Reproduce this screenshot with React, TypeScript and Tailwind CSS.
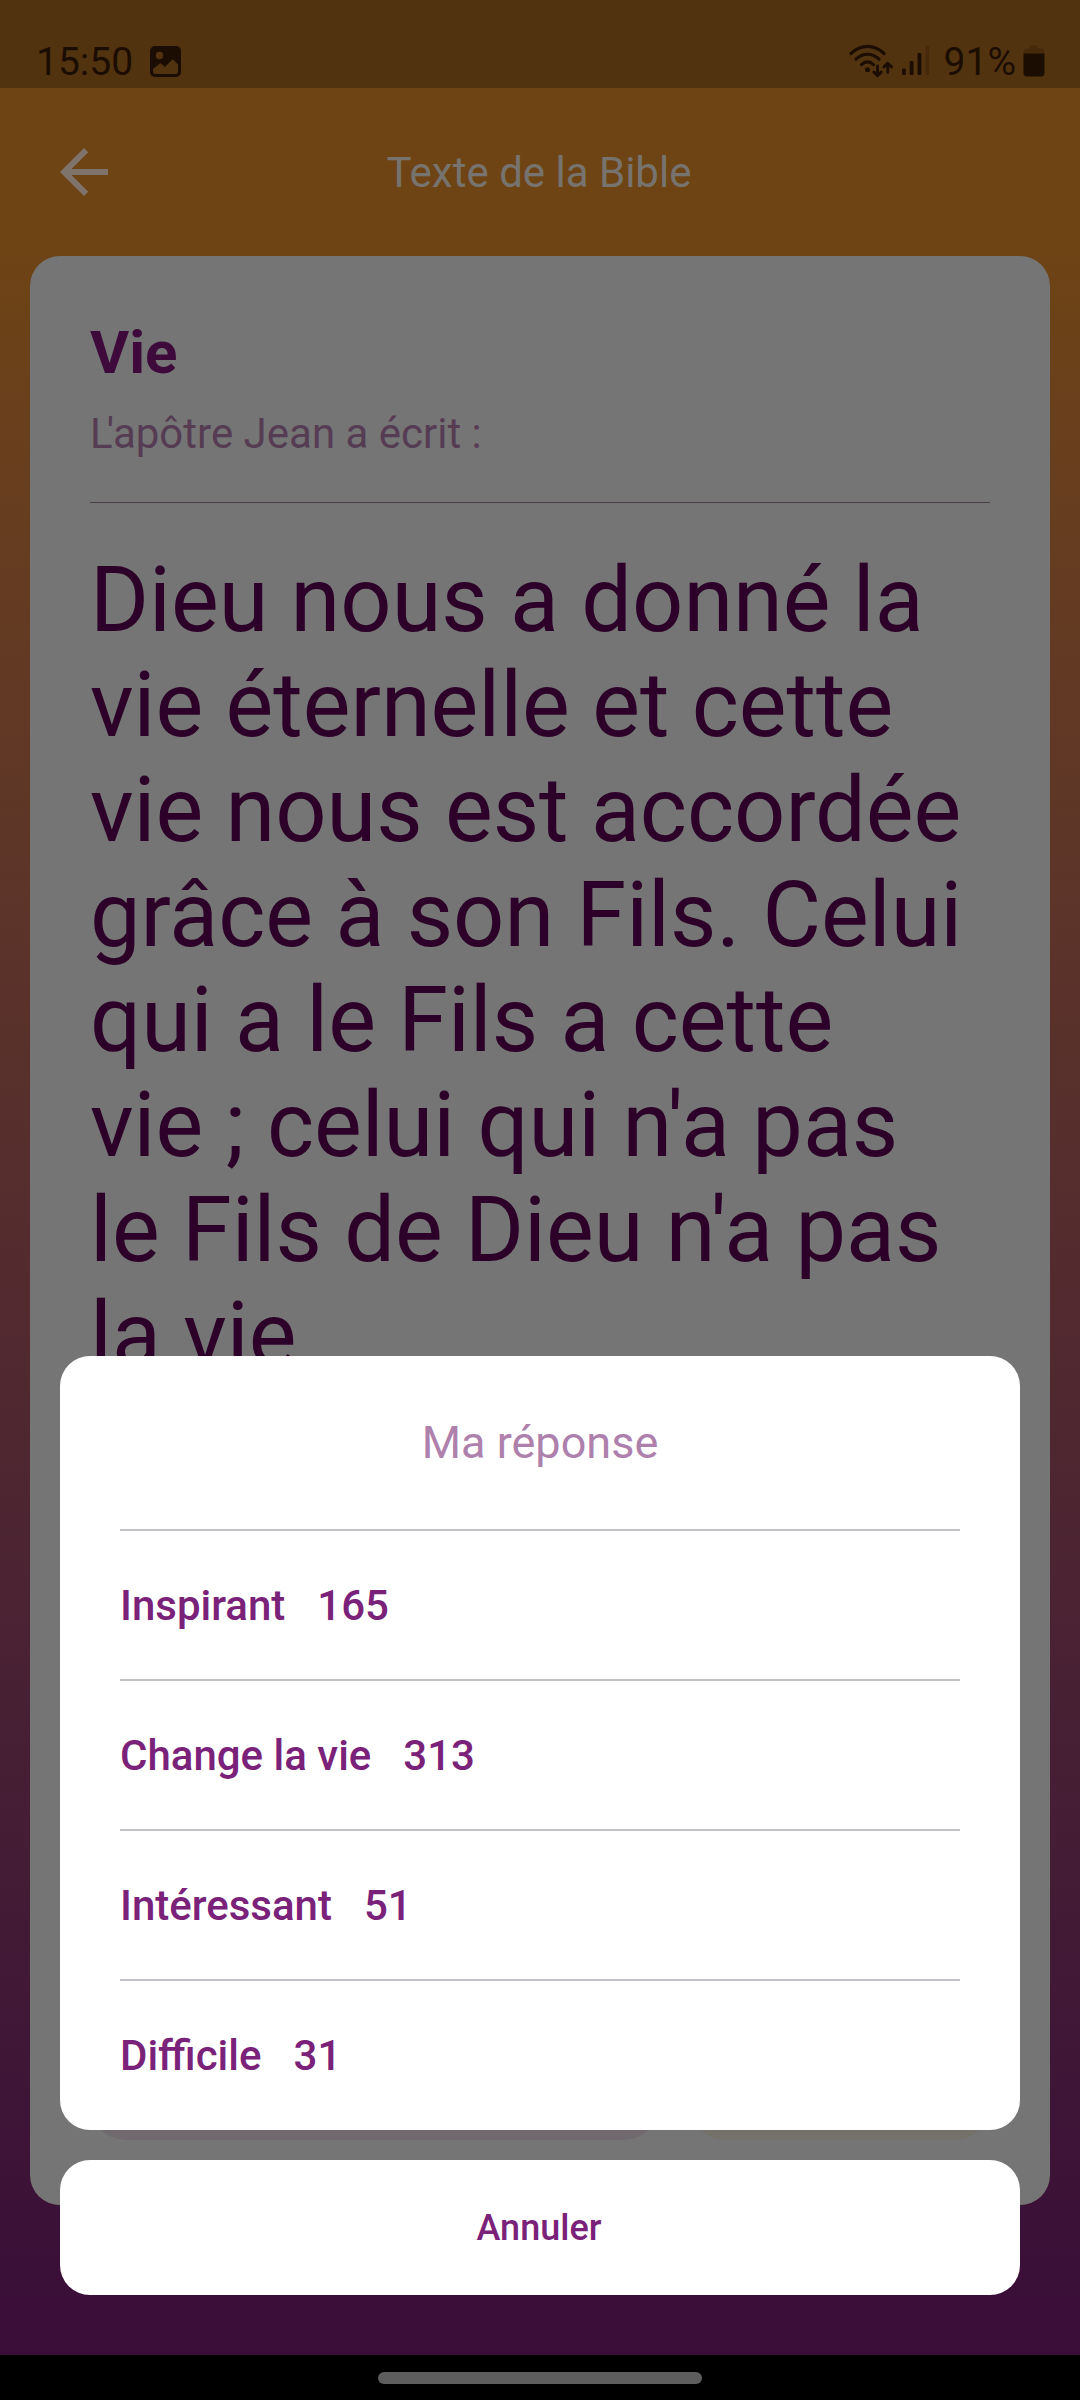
import React from "react";

const options = [
  { label: "Inspirant", count: 165 },
  { label: "Change la vie", count: 313 },
  { label: "Intéressant", count: 51 },
  { label: "Difficile", count: 31 },
];

const verse = [
  "Dieu nous a donné la",
  "vie éternelle et cette",
  "vie nous est accordée",
  "grâce à son Fils. Celui",
  "qui a le Fils a cette",
  "vie ; celui qui n'a pas",
  "le Fils de Dieu n'a pas",
  "la vie.",
];

function PictureIcon() {
  return (
    <svg width="31" height="31" viewBox="0 0 31 31" className="ml-[18px]">
      <path
        fill="currentColor"
        fillRule="evenodd"
        d="M5 0h21a5 5 0 0 1 5 5v21a5 5 0 0 1-5 5H5a5 5 0 0 1-5-5V5a5 5 0 0 1 5-5ZM9.5 5.8a3.7 3.7 0 1 0 0 7.4a3.7 3.7 0 0 0 0-7.4ZM3 23v2.5A2.5 2.5 0 0 0 5.500 28h20a2.500 2.500 0 0 0 2.500-2.500V18.500l-4.400-4.600a1.200 1.200 0 0 0-1.700 0l-7 7.200-3.600-3.300a1.200 1.200 0 0 0-1.700 0L3 23Z"
      />
    </svg>
  );
}

function WifiIcon() {
  return (
    <svg width="44" height="34" viewBox="0 0 44 34" fill="none" stroke="currentColor">
      <g strokeWidth="3.200" strokeLinecap="round">
        <path d="M2 9.500C12 0 25 0 35 9.500" />
        <path d="M7 15.200c7-6.600 16-6.600 23 0" />
        <path d="M12.500 20.600c4-3.600 8-3.600 12 0" />
      </g>
      <circle cx="18.500" cy="25.700" r="2.500" fill="currentColor" stroke="none" />
      <g strokeWidth="2.900" strokeLinecap="round" strokeLinejoin="round">
        <path d="M28.500 22v9.500M24.800 28l3.700 3.700 3.700-3.700" />
        <path d="M38.700 28.500V19.200M35 22.900l3.700-3.700 3.700 3.700" />
      </g>
    </svg>
  );
}

function SignalIcon() {
  return (
    <svg width="28" height="30" viewBox="0 0 28 30" fill="currentColor" className="ml-[9px]">
      <rect x="0" y="22.500" width="3.800" height="6.500" rx="1.200" />
      <rect x="7.700" y="15" width="3.800" height="14" rx="1.200" />
      <rect x="15.600" y="7" width="3.800" height="22" rx="1.200" />
      <rect x="23.500" y="0" width="3.800" height="29" rx="1.200" opacity="0.22" />
    </svg>
  );
}

function BatteryIcon() {
  return (
    <svg width="22" height="32" viewBox="0 0 22 32" fill="currentColor" className="ml-[7px]">
      <path opacity="0.22" d="M7 0.500h8v3h4a2.500 2.500 0 0 1 2.500 2.500v2.500h-21V6a2.500 2.500 0 0 1 2.500-2.500h4Z" />
      <path d="M0.500 8.500h21V28a3.500 3.500 0 0 1-3.500 3.500H4A3.500 3.500 0 0 1 0.500 28Z" />
    </svg>
  );
}

function StatusBar() {
  return (
    <div className="flex h-[88px] justify-between bg-black/25 pr-[35px] pl-[36px] pt-[34px] text-[39px] leading-[54px] text-[#1c0d02]">
      <div className="flex h-[54px] items-center">
        <span className="w-[96px] whitespace-nowrap pt-[2px]">15:50</span>
        <PictureIcon />
      </div>
      <div className="flex h-[54px] items-center">
        <WifiIcon />
        <SignalIcon />
        <span className="ml-[14px] pt-[2px]">91%</span>
        <BatteryIcon />
      </div>
    </div>
  );
}

export default function App() {
  return (
    <div className="relative flex h-[2400px] w-[1080px] flex-col overflow-hidden bg-black font-['Roboto',sans-serif]">
      <div className="flex h-[2355px] flex-col bg-linear-to-b from-[#6e4414] from-10% to-[#3a0e38] to-98%">
        <StatusBar />
        <header className="relative flex h-[168px] items-center justify-center">
          <svg
            width="48"
            height="48"
            viewBox="0 0 48 48"
            className="absolute top-[60px] left-[60px] text-[#7f746b]"
          >
            <path fill="currentColor" d="M48 21H11.500L28.200 4.200L24 0L0 24L24 48L28.200 43.800L11.500 27H48Z" />
          </svg>
          <h1 className="pt-[2px] pr-[2px] text-[42px] leading-[50px] text-[#77736f]">Texte de la Bible</h1>
        </header>
        <main className="mx-[30px] flex h-[1949px] flex-col rounded-[30px] bg-[#757575] px-[60px] pt-[62px]">
          <h2 className="h-[70px] text-[60px] leading-[70px] font-bold text-[#3d0a3b]">Vie</h2>
          <p className="mt-[21px] h-[50px] text-[42px] leading-[50px] text-[#553c53]">
            <span className="tracking-[-6px]">L</span>'apôtre Jean a écrit :
          </p>
          <div className="mt-[43px] h-px bg-[#483f48]" />
          <div className="mt-[45px] text-[90px] leading-[105px] whitespace-nowrap text-[#2c0029]">
            {verse.map((line) => (
              <p key={line}>{line}</p>
            ))}
          </div>
          <div className="mt-auto mb-[65px] flex h-[120px] gap-[30px]">
            <div className="w-[570px] rounded-[36px] bg-[#706a6f]" />
            <div className="flex-1 rounded-[36px] bg-[#74716b]" />
          </div>
        </main>
      </div>
      <div className="flex h-[45px] justify-center pt-[17px]">
        <div className="h-[12px] w-[324px] rounded-full bg-[#5e5e5e]" />
      </div>

      <div className="absolute inset-x-[60px] bottom-[105px] flex flex-col gap-[30px]">
        <section className="h-[774px] rounded-[30px] bg-white px-[60px] pt-[60px]">
          <h3 className="h-[113px] text-center text-[45px] leading-[53px] text-[#ae80ac]">Ma réponse</h3>
          <ul>
            {options.map((o) => (
              <li
                key={o.label}
                className="flex h-[150px] items-center gap-[32px] border-t-2 border-[#c5c2c7] text-[42px] font-medium text-[#7a2279]"
              >
                <span>{o.label}</span>
                <span>{o.count}</span>
              </li>
            ))}
          </ul>
        </section>
        <button className="h-[135px] rounded-[30px] bg-white pr-[2px] text-[36px] font-medium text-[#7a2279]">
          Annuler
        </button>
      </div>
    </div>
  );
}
